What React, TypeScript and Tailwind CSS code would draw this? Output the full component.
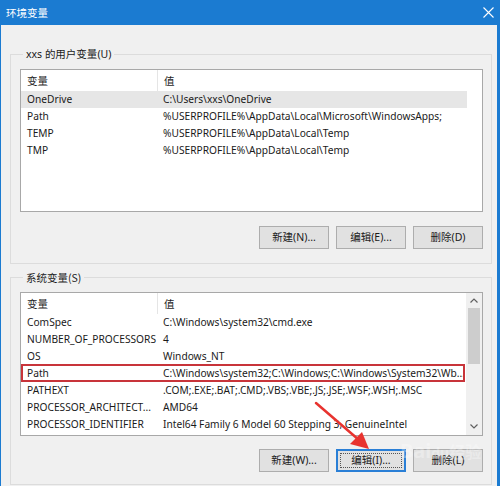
import React from "react";

type R = { n: string; v: string; sel?: boolean };

const userRows: R[] = [
  { n: "OneDrive", v: "C:\\Users\\xxs\\OneDrive", sel: true },
  { n: "Path", v: "%USERPROFILE%\\AppData\\Local\\Microsoft\\WindowsApps;" },
  { n: "TEMP", v: "%USERPROFILE%\\AppData\\Local\\Temp" },
  { n: "TMP", v: "%USERPROFILE%\\AppData\\Local\\Temp" },
];

const sysRows: R[] = [
  { n: "ComSpec", v: "C:\\Windows\\system32\\cmd.exe" },
  { n: "NUMBER_OF_PROCESSORS", v: "4" },
  { n: "OS", v: "Windows_NT" },
  { n: "Path", v: "C:\\Windows\\system32;C:\\Windows;C:\\Windows\\System32\\Wb..." },
  { n: "PATHEXT", v: ".COM;.EXE;.BAT;.CMD;.VBS;.VBE;.JS;.JSE;.WSF;.WSH;.MSC" },
  { n: "PROCESSOR_ARCHITECT...", v: "AMD64" },
  { n: "PROCESSOR_IDENTIFIER", v: "Intel64 Family 6 Model 60 Stepping 3, GenuineIntel" },
];

function Header() {
  return (
    <div className="flex h-[21px] items-center text-[#1e1e1e] font-['Noto_Sans_CJK_SC',sans-serif] text-[10.5px]">
      <div className="w-[137px] h-full flex items-center pl-[6px] border-r border-[#e5e5e5]">变量</div>
      <div className="pl-[6px]">值</div>
    </div>
  );
}

function Row({ r }: { r: R }) {
  return (
    <div className={`flex h-[17px] items-center w-[446px] ${r.sel ? "bg-[#e6e6e6]" : ""}`}>
      <div className="w-[137px] pl-[6px] whitespace-nowrap overflow-hidden">{r.n}</div>
      <div className="flex-1 pl-[5px] whitespace-nowrap overflow-hidden">{r.v}</div>
    </div>
  );
}

function Btn({ label, focus }: { label: string; focus?: boolean }) {
  return (
    <div
      className={`w-[70px] h-[23px] flex items-center justify-center bg-[#e1e1e1] text-[10.5px] ${
        focus ? "border-2 border-[#2a7fd6]" : "border border-[#adadad]"
      }`}
    >
      <div className={`flex items-center justify-center ${focus ? "border border-dotted border-[#555] w-[62px] h-[15px]" : ""}`}>
        {label}
      </div>
    </div>
  );
}

export default function App() {
  return (
    <div className="w-[500px] h-[486px] overflow-hidden bg-[#1b7bd1] relative font-['Noto_Sans','Noto_Sans_CJK_SC',sans-serif] text-[10.2px] text-[#1a1a1a]">
      <div className="h-[25px] flex items-center justify-between pl-[6px] pr-[6px] text-white">
        <span className="font-['Noto_Sans_CJK_SC',sans-serif] text-[10.5px]">环境变量</span>
        <svg width="11" height="11" viewBox="0 0 11 11">
          <path d="M0.5 0.5L10.5 10.5M10.5 0.5L0.5 10.5" stroke="#ffffff" strokeWidth="1.1" />
        </svg>
      </div>
      <div className="ml-[1px] mr-[3px] h-[461px] bg-[#f0f0f0] pt-[20px]">
        <fieldset className="ml-[9px] w-[481px] border border-[#dcdcdc] pl-[9px] pr-[8px] pb-[14px]">
          <legend className="ml-[3px] px-[3px] leading-[17px] text-[10.5px]">
            <span>xxs </span>
            <span className="font-['Noto_Sans_CJK_SC',sans-serif]">的用户变量</span>
            <span>(U)</span>
          </legend>
          <div className="mt-[6px] w-[463px] h-[143px] border border-[#a8a8a8] bg-white overflow-hidden">
            <Header />
            {userRows.map((r) => (
              <Row key={r.n} r={r} />
            ))}
          </div>
          <div className="mt-[14px] flex justify-end gap-[7px]">
            <Btn label="新建(N)..." />
            <Btn label="编辑(E)..." />
            <Btn label="删除(D)" />
          </div>
        </fieldset>
        <fieldset className="mt-[5px] ml-[9px] w-[481px] border border-[#dcdcdc] pl-[9px] pr-[8px] pb-[12px]">
          <legend className="ml-[3px] px-[3px] leading-[17px] text-[10.5px] font-['Noto_Sans_CJK_SC',sans-serif]">系统变量(S)</legend>
          <div className="mt-[6px] w-[463px] h-[144px] border border-[#a8a8a8] bg-white overflow-hidden flex">
            <div className="flex-1 overflow-hidden relative">
              <Header />
              {sysRows.map((r) => (
                <Row key={r.n + r.v} r={r} />
              ))}
              <div className="absolute left-0 top-[71px] w-[444px] h-[18px] border-2 border-[#c8343a]" />
            </div>
            <div className="w-[16px] bg-[#f0f0f0] flex flex-col items-center">
              <div className="h-[15px] flex items-center justify-center">
                <svg width="8" height="5" viewBox="0 0 8 5">
                  <path d="M0.5 4.5L4 1L7.5 4.5" stroke="#606060" strokeWidth="1.2" fill="none" />
                </svg>
              </div>
              <div className="w-[12px] h-[56px] bg-[#cdcdcd]" />
              <div className="flex-1" />
              <div className="h-[17px] flex items-center justify-center">
                <svg width="8" height="5" viewBox="0 0 8 5">
                  <path d="M0.5 0.5L4 4L7.5 0.5" stroke="#606060" strokeWidth="1.2" fill="none" />
                </svg>
              </div>
            </div>
          </div>
          <div className="mt-[13px] flex justify-end gap-[7px]">
            <Btn label="新建(W)..." />
            <Btn label="编辑(I)..." focus />
            <Btn label="删除(L)" />
          </div>
        </fieldset>
      </div>
      <svg className="absolute left-0 top-0 pointer-events-none" width="500" height="486" viewBox="0 0 500 486">
        <path d="M316 403 L359 440" stroke="#e8332f" strokeWidth="2.5" strokeLinecap="round" />
        <path d="M369 449 L350 444 L362 432 Z" fill="#e8332f" />
      </svg>
      <div className="absolute left-[400px] top-[436px] text-[20px] font-bold text-white opacity-30 pointer-events-none">
        Bai<span className="text-[14px]">du</span>
        <span className="text-[16px] font-['Noto_Sans_CJK_SC',sans-serif]">经验</span>
      </div>
    </div>
  );
}
